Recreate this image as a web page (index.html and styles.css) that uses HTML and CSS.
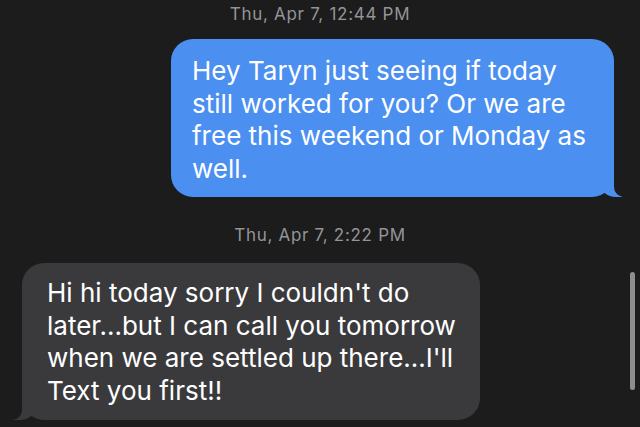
FILE: index.html
```html
<!DOCTYPE html>
<html lang="en">
<head>
<meta charset="utf-8">
<title>Messages</title>
<link rel="stylesheet" href="styles.css">
</head>
<body>
  <main class="thread">
    <div class="stamp stamp-first">Thu, Apr 7, 12:44 PM</div>
    <div class="row row-sent">
      <div class="bubble sent">Hey Taryn just seeing if today still worked for you? Or we are free this weekend or Monday as well.</div>
    </div>
    <div class="stamp stamp-second">Thu, Apr 7, 2:22 PM</div>
    <div class="row row-recv">
      <div class="bubble recv">Hi hi today sorry I couldn't do later...but I can call you tomorrow when we are settled up there...I'll Text you first!!</div>
    </div>
  </main>
  <div class="scrollbar"></div>
</body>
</html>
```

FILE: styles.css
```css
* { box-sizing: border-box; }
html, body {
  margin: 0;
  padding: 0;
  height: 100%;
  overflow: hidden;
}
body {
  background: #1c1c1c;
  font-family: "Inter", "Liberation Sans", sans-serif;
  color: #ffffff;
}
.thread {
  display: flex;
  flex-direction: column;
}
.stamp {
  text-align: center;
  color: #949498;
  font-size: 17px;
  letter-spacing: 0.7px;
  line-height: 22px;
}
.stamp-first {
  margin-top: 3px;
}
.stamp-second {
  margin-top: 27px;
}
.row {
  display: flex;
}
.row-sent {
  justify-content: flex-end;
  padding-right: 26px;
  margin-top: 14px;
}
.row-recv {
  justify-content: flex-start;
  padding-left: 22px;
  margin-top: 17px;
}
.bubble {
  position: relative;
  font-size: 26px;
  line-height: 32.5px;
  border-radius: 22px;
}
.sent {
  width: 443px;
  background: #4b8ff1;
  padding: 16px 18px 12px 21px;
}
.recv {
  width: 458px;
  background: #3a3a3c;
  padding: 14px 16px 13px 25px;
}
.sent::before,
.recv::before {
  content: "";
  position: absolute;
  bottom: 0;
  height: 22px;
  width: 22px;
}
.sent::before {
  right: -8px;
  background: #4b8ff1;
  border-bottom-left-radius: 16px 14px;
}
.recv::before {
  left: -8px;
  background: #3a3a3c;
  border-bottom-right-radius: 16px 14px;
}
.sent::after,
.recv::after {
  content: "";
  position: absolute;
  bottom: 0;
  width: 12px;
  height: 24px;
  background: #1c1c1c;
}
.sent::after {
  right: -12px;
  border-bottom-left-radius: 10px;
}
.recv::after {
  left: -12px;
  border-bottom-right-radius: 10px;
}
.scrollbar {
  position: fixed;
  left: 630px;
  top: 272px;
  width: 5px;
  height: 118px;
  border-radius: 3px;
  background: #8e8e90;
}
```
